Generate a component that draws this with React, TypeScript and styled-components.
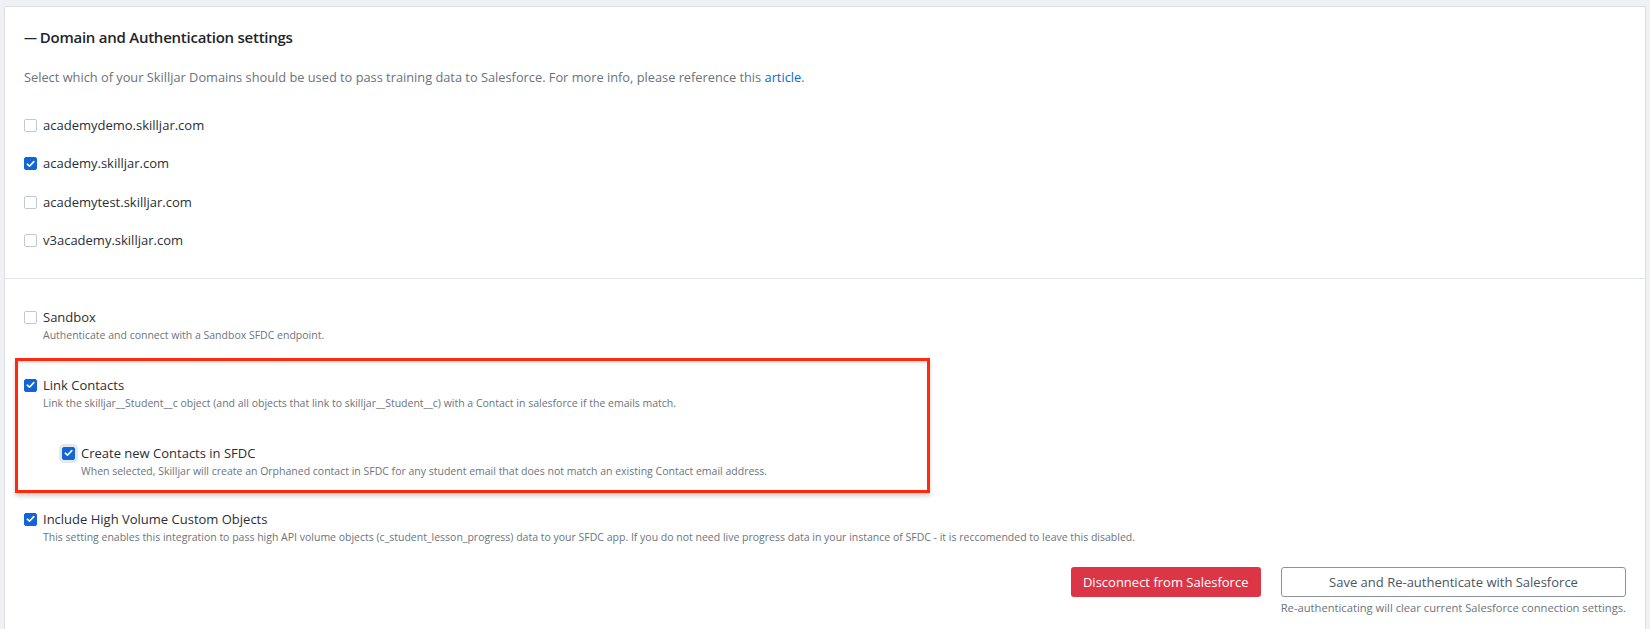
import styled, { createGlobalStyle } from 'styled-components'

const GlobalStyle = createGlobalStyle`
  body {
    margin: 0;
    background: #eef2f5;
    font-family: "Open Sans", "Liberation Sans", sans-serif;
    color: #2a2f35;
  }
`

const Page = styled.div`
  padding: 6px 4px 0 4px;
  height: 623px;
  overflow: hidden;
`

const Card = styled.div`
  background: #fff;
  border: 1px solid #dcdfe3;
  border-bottom: none;
  border-radius: 2px 2px 0 0;
  height: 100%;
`

const Section = styled.div<{ $top: number; $bottom: number }>`
  padding: ${p => p.$top}px 19px ${p => p.$bottom}px 19px;
  display: flex;
  flex-direction: column;
`

const Divider = styled.div`
  height: 1px;
  background: #e1e4e8;
`

const Title = styled.h3`
  margin: 0;
  font-size: 15px;
  line-height: 22px;
  font-weight: 600;
  letter-spacing: -0.25px;
  color: #1f252b;
  display: flex;
  align-items: center;
  gap: 3px;

  .dash {
    font-weight: 700;
    font-size: 13px;
  }
`

const Intro = styled.p`
  margin: 19px 0 28px;
  font-size: 12.8px;
  line-height: 20px;
  color: #69737d;

  a {
    color: #0b66d6;
    text-decoration: none;
  }
`

const DomainList = styled.div`
  display: flex;
  flex-direction: column;
  gap: 18.3px;
`

const Option = styled.label<{ $indent?: number }>`
  display: flex;
  align-items: flex-start;
  gap: 6px;
  padding-left: ${p => p.$indent || 0}px;
`

const Box = styled.span<{ $checked?: boolean; $focus?: boolean }>`
  flex: none;
  width: 13px;
  height: 13px;
  margin-top: 4px;
  box-sizing: border-box;
  border-radius: 2px;
  border: 1px solid ${p => (p.$checked ? '#1364d6' : '#c3c8ce')};
  background: ${p => (p.$checked ? '#1364d6' : '#fff')};
  box-shadow: ${p => (p.$focus ? '0 0 0 3px #e4e8ee' : 'none')};
  display: flex;
  align-items: center;
  justify-content: center;
`

const Text = styled.div`
  display: flex;
  flex-direction: column;
`

const Label = styled.span`
  font-size: 13px;
  line-height: 20px;
  color: #2a2f35;
`

const Help = styled.span`
  font-size: 10.5px;
  line-height: 16px;
  color: #6b747e;
`

const Highlight = styled.div`
  box-sizing: border-box;
  margin: 15px 0 16px -9px;
  width: 915px;
  border: 3px solid #ff2a0c;
  box-shadow: 0 3px 4px rgba(0, 0, 0, 0.18), inset 0 3px 3px -1px rgba(0, 0, 0, 0.12);
  padding: 14px 6px 11px;
  display: flex;
  flex-direction: column;
  gap: 32px;
`

const Actions = styled.div`
  margin-top: 22px;
  display: flex;
  justify-content: flex-end;
  align-items: flex-start;
  gap: 20px;
`

const DangerButton = styled.button`
  width: 190px;
  height: 30px;
  padding: 0;
  border: none;
  border-radius: 3px;
  background: #dc3545;
  color: #fff;
  font-family: inherit;
  font-size: 13px;
  white-space: nowrap;
`

const SaveColumn = styled.div`
  display: flex;
  flex-direction: column;
  align-items: flex-end;
  gap: 3px;
`

const OutlineButton = styled.button`
  width: 345px;
  height: 30px;
  padding: 0;
  border: 1px solid #8a949e;
  border-radius: 3px;
  background: #fff;
  color: #4b5560;
  font-family: inherit;
  font-size: 13px;
  white-space: nowrap;
`

const Note = styled.span`
  font-size: 11.2px;
  line-height: 16px;
  color: #6b747e;
  white-space: nowrap;
`

const Check = () => (
  <svg width="9" height="8" viewBox="0 0 9 8">
    <path d="M1.3 4.2 L3.5 6.2 L7.8 1.6" fill="none" stroke="#fff" strokeWidth="1.6" strokeLinecap="round" strokeLinejoin="round" />
  </svg>
)

type OptProps = { label: string; help?: string; checked?: boolean; focus?: boolean; indent?: number }

const Opt = ({ label, help, checked, focus, indent }: OptProps) => (
  <Option $indent={indent}>
    <Box $checked={checked} $focus={focus}>{checked && <Check />}</Box>
    <Text>
      <Label>{label}</Label>
      {help && <Help>{help}</Help>}
    </Text>
  </Option>
)

const domains = [
  { name: 'academydemo.skilljar.com', on: false },
  { name: 'academy.skilljar.com', on: true },
  { name: 'academytest.skilljar.com', on: false },
  { name: 'v3academy.skilljar.com', on: false },
]

const App = () => {
  return (
    <Page>
      <GlobalStyle />
      <Card>
        <Section $top={19} $bottom={28}>
          <Title><span className="dash">—</span>Domain and Authentication settings</Title>
          <Intro>
            Select which of your Skilljar Domains should be used to pass training data to Salesforce. For more info, please reference this <a href="#">article</a>.
          </Intro>
          <DomainList>
            {domains.map(d => (
              <Opt key={d.name} label={d.name} checked={d.on} />
            ))}
          </DomainList>
        </Section>

        <Divider />

        <Section $top={28} $bottom={0}>
          <Opt label="Sandbox" help="Authenticate and connect with a Sandbox SFDC endpoint." />

          <Highlight>
            <Opt
              checked
              label="Link Contacts"
              help="Link the skilljar__Student__c object (and all objects that link to skilljar__Student__c) with a Contact in salesforce if the emails match."
            />
            <Opt
              checked
              focus
              indent={38}
              label="Create new Contacts in SFDC"
              help="When selected, Skilljar will create an Orphaned contact in SFDC for any student email that does not match an existing Contact email address."
            />
          </Highlight>

          <Opt
            checked
            label="Include High Volume Custom Objects"
            help="This setting enables this integration to pass high API volume objects (c_student_lesson_progress) data to your SFDC app. If you do not need live progress data in your instance of SFDC - it is reccomended to leave this disabled."
          />

          <Actions>
            <DangerButton>Disconnect from Salesforce</DangerButton>
            <SaveColumn>
              <OutlineButton>Save and Re-authenticate with Salesforce</OutlineButton>
              <Note>Re-authenticating will clear current Salesforce connection settings.</Note>
            </SaveColumn>
          </Actions>
        </Section>
      </Card>
    </Page>
  )
}

export default App
